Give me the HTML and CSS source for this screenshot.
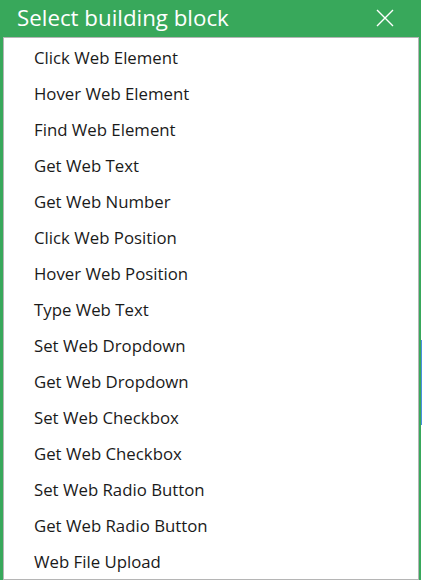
FILE: index.html
```html
<!DOCTYPE html>
<html>
<head>
<meta charset="utf-8">
<link rel="stylesheet" href="styles.css">
</head>
<body>
<div class="screen">
  <div class="dialog">
    <div class="titlebar">
      <span class="title">Select building block</span>
      <svg class="close" width="18" height="18" viewBox="0 0 18 18"><path d="M1 1 L17 17 M17 1 L1 17" stroke="#fff" stroke-width="1.4" fill="none"/></svg>
    </div>
    <ul class="list">
      <li>Click Web Element</li>
      <li>Hover Web Element</li>
      <li>Find Web Element</li>
      <li>Get Web Text</li>
      <li>Get Web Number</li>
      <li>Click Web Position</li>
      <li>Hover Web Position</li>
      <li>Type Web Text</li>
      <li>Set Web Dropdown</li>
      <li>Get Web Dropdown</li>
      <li>Set Web Checkbox</li>
      <li>Get Web Checkbox</li>
      <li>Set Web Radio Button</li>
      <li>Get Web Radio Button</li>
      <li>Web File Upload</li>
    </ul>
  </div>
  <div class="sliver">
    <div class="gap-a"></div>
    <div class="blue"></div>
    <div class="gap-b"></div>
  </div>
</div>
</body>
</html>
```
FILE: styles.css
```css
html, body {
  margin: 0;
  padding: 0;
  width: 422px;
  height: 580px;
  overflow: hidden;
  background: #ffffff;
}
.screen {
  display: flex;
  width: 422px;
  height: 580px;
}
.dialog {
  width: 421px;
  height: 580px;
  background: #38a85b;
  display: flex;
  flex-direction: column;
  box-sizing: border-box;
  padding: 0 2px 0 3px;
}
.titlebar {
  height: 37px;
  display: flex;
  align-items: center;
  justify-content: space-between;
  padding: 0 25px 0 14px;
  box-sizing: border-box;
}
.title {
  font-family: "Open Sans", "Noto Sans", sans-serif;
  font-size: 22.3px;
  color: #ffffff;
  line-height: 37px;
  margin-top: -3px;
}
.close {
  display: block;
  margin-top: -2px;
}
.list {
  list-style: none;
  margin: 0;
  padding: 2px 0 0 0;
  background: #ffffff;
  border: 1px solid #b5b5b5;
  height: 543px;
  box-sizing: border-box;
}
.list li {
  height: 36px;
  line-height: 36px;
  padding-left: 30px;
  font-family: "Open Sans", "Noto Sans", sans-serif;
  font-size: 16.8px;
  color: #1a1a1a;
}
.sliver {
  width: 1px;
  display: flex;
  flex-direction: column;
}
.gap-a { height: 340px; }
.blue { height: 85px; background: #4a90e2; }
.gap-b { flex: 1; }
```
